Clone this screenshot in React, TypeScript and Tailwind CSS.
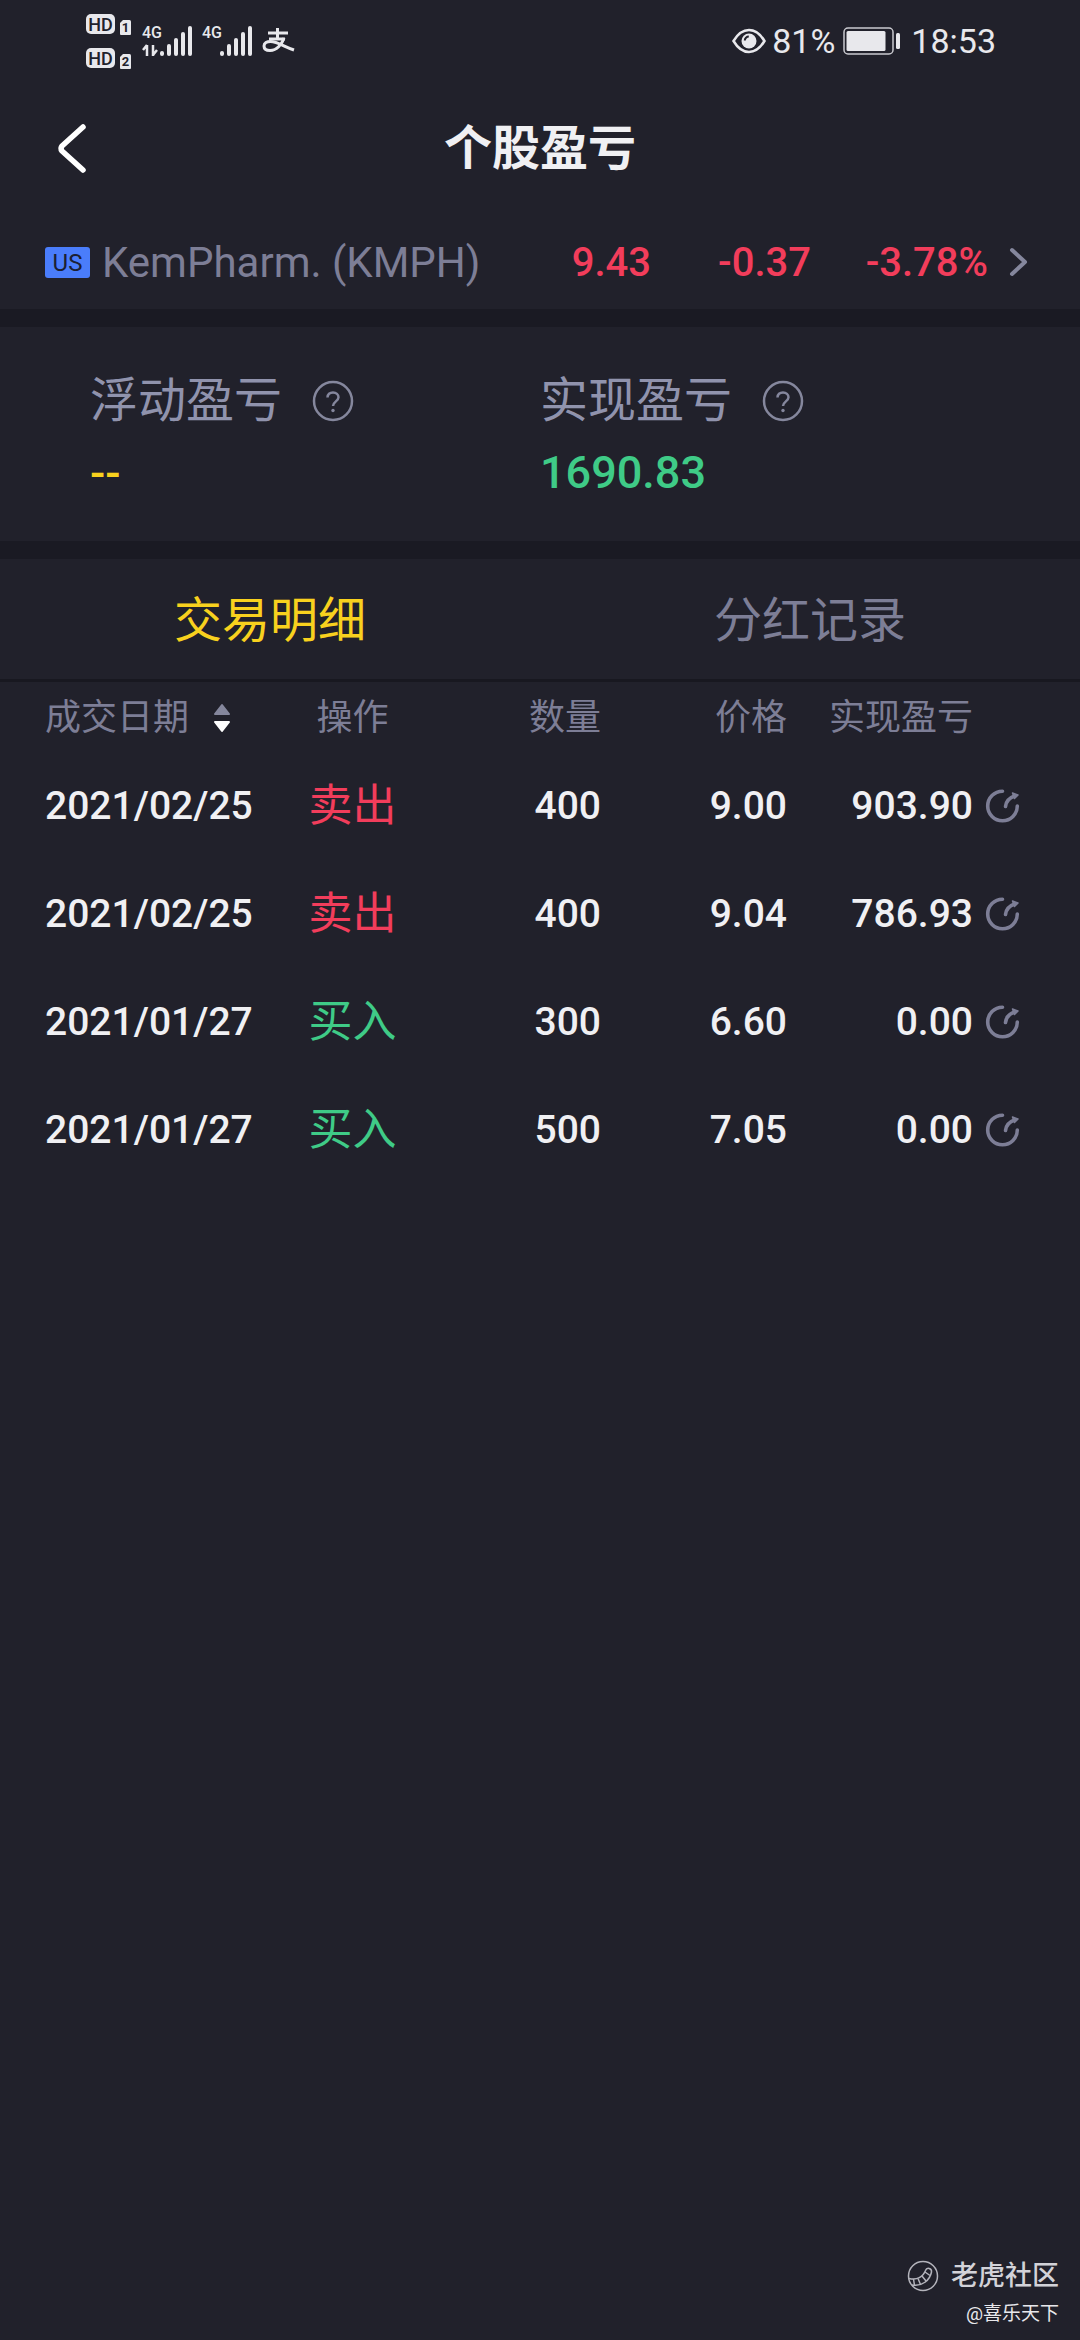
import { useState } from "react";

type Trade = {
  date: string;
  side: "buy" | "sell";
  quantity: string;
  price: string;
  profit: string;
};

const TRADES: Trade[] = [
  { date: "2021/02/25", side: "sell", quantity: "400", price: "9.00", profit: "903.90" },
  { date: "2021/02/25", side: "sell", quantity: "400", price: "9.04", profit: "786.93" },
  { date: "2021/01/27", side: "buy", quantity: "300", price: "6.60", profit: "0.00" },
  { date: "2021/01/27", side: "buy", quantity: "500", price: "7.05", profit: "0.00" },
];

const TABS = ["交易明细", "分红记录"];

function HdBadge({ sim }: { sim: string }) {
  return (
    <svg width="47" height="22" viewBox="0 0 47 22" aria-hidden="true">
      <rect x="1" y="1" width="29" height="20" rx="5" fill="#e8e8ec" />
      <text x="15.5" y="17.5" textAnchor="middle" fontSize="18" fontWeight="500" fill="#21212b">HD</text>
      <path d="M38 7h6.500a1.500 1.500 0 0 1 1.500 1.500V21a1 1 0 0 1-1 1H36a1 1 0 0 1-1-1V10z" fill="#e8e8ec" />
      <text x="40.500" y="19" textAnchor="middle" fontSize="13" fontWeight="700" fill="#21212b">{sim}</text>
    </svg>
  );
}

function Signal({ data }: { data?: boolean }) {
  return (
    <svg width="52" height="34" viewBox="0 0 52 34" fill="#e8e8ec" aria-hidden="true">
      <text x="0" y="14" fontSize="16" fontWeight="500">4G</text>
      {data && (
        <path d="M5 21v11M5 21l-4 5M11 21v11M11 31l4-5" fill="none" stroke="#e8e8ec" strokeWidth="2.500" />
      )}
      <rect x="18" y="27" width="4" height="5" rx="2" />
      <rect x="25" y="20" width="4" height="12" rx="2" />
      <rect x="32" y="14" width="4" height="18" rx="2" />
      <rect x="39" y="8" width="4" height="24" rx="2" />
      <rect x="46" y="2" width="4" height="30" rx="2" />
    </svg>
  );
}

function PayIcon() {
  return (
    <svg width="34" height="28" viewBox="0 0 34 28" fill="none" stroke="#e8e8ec" aria-hidden="true">
      <path d="M6 6h20M15.500 1v11M7 12h16" strokeWidth="3" />
      <path
        d="M22 11c-2 6-7 12.500-14 12.500C4 23.500 2 21.500 2 19c0-3 3-4.500 6.500-4.500C15 14.500 22 19.500 32 23"
        strokeWidth="3"
      />
    </svg>
  );
}

function EyeIcon() {
  return (
    <svg width="34" height="26" viewBox="0 0 34 26" fill="none" aria-hidden="true">
      <path d="M1.500 13C6 5.500 11 2 17 2s11 3.500 15.500 11C28 20.500 23 24 17 24S6 20.500 1.500 13z" stroke="#e8e8ec" strokeWidth="2.500" />
      <circle cx="17" cy="13" r="7.500" fill="#e8e8ec" />
      <path d="M12.800 12.500a4 4 0 0 1 4-4" stroke="#21212b" strokeWidth="2" />
    </svg>
  );
}

function BatteryIcon() {
  return (
    <svg width="58" height="28" viewBox="0 0 58 28" aria-hidden="true">
      <rect x="1" y="1" width="49" height="26" rx="4" fill="none" stroke="#c9c9cf" strokeWidth="1.500" />
      <rect x="3.500" y="4" width="39" height="20" rx="1.500" fill="#e8e8ec" />
      <rect x="53" y="6" width="4" height="16" rx="1.500" fill="#e8e8ec" />
    </svg>
  );
}

function HelpIcon() {
  return (
    <svg width="42" height="42" viewBox="0 0 42 42" fill="none" stroke="#85879d" aria-hidden="true">
      <circle cx="21" cy="21" r="19" strokeWidth="2.500" />
      <path d="M15.500 17.500c0-3.200 2.300-5 5.500-5s5.500 2 5.500 4.800c0 4-5.500 4.200-5.500 8.700" strokeWidth="2.500" />
      <circle cx="21" cy="30.500" r="1.700" fill="#85879d" stroke="none" />
    </svg>
  );
}

function ShareIcon() {
  return (
    <svg width="36" height="36" viewBox="0 0 36 36" fill="none" stroke="#7d7e96" strokeLinecap="round" strokeLinejoin="round" aria-hidden="true">
      <path d="M17.500 3.200A14.800 14.800 0 1 0 32.300 18" strokeWidth="3.600" />
      <path d="M20.500 18.500c.500-5 3.500-8.500 9-10.500" strokeWidth="3.600" />
      <path d="M27.500 5l5.500 2-3.500 3.500z" fill="#7d7e96" strokeWidth="1.500" />
    </svg>
  );
}

function StatusBar() {
  return (
    <div className="flex h-[82px] items-center justify-between pl-[85px] pr-[84px] text-[#e8e8ec]">
      <div className="flex items-center">
        <div className="mr-2.5 flex flex-col gap-3">
          <HdBadge sim="1" />
          <HdBadge sim="2" />
        </div>
        <Signal data />
        <span className="mx-2">
          <Signal />
        </span>
        <PayIcon />
      </div>
      <div className="flex items-center text-[34px]">
        <EyeIcon />
        <span className="ml-1.5 mr-2">81%</span>
        <BatteryIcon />
        <span className="ml-2.5">18:53</span>
      </div>
    </div>
  );
}

function Summary({ label, value, color }: { label: string; value: string; color: string }) {
  return (
    <div>
      <div className="flex items-center gap-[30px]">
        <span className="text-[48px] leading-[72px] text-[#9093ad]">{label}</span>
        <button type="button" aria-label={label}>
          <HelpIcon />
        </button>
      </div>
      <div className={`text-[45px] font-medium leading-[72px] ${color}`}>{value}</div>
    </div>
  );
}

export default function App() {
  const [tab, setTab] = useState(TABS[0]);

  return (
    <div className="flex min-h-screen flex-col bg-[#21212b] font-[Roboto,'Noto_Sans_CJK_SC',sans-serif]">
      <StatusBar />

      {/* Title */}
      <header className="grid h-[134px] grid-cols-[1fr_auto_1fr] items-center px-[51px]">
        <button type="button" aria-label="返回" className="justify-self-start">
          <svg width="40" height="54" viewBox="0 0 40 54" fill="none" stroke="#fff" strokeWidth="5.500" strokeLinecap="round" strokeLinejoin="round">
            <path d="M32 5L11 24q-2 2.500 0 5L32 48" />
          </svg>
        </button>
        <h1 className="text-[48px] font-bold text-[#f0f0f3]">个股盈亏</h1>
      </header>

      {/* Stock quote */}
      <a href="#quote" className="flex h-[93px] items-center pl-[45px] pr-[50px] text-[40px] font-medium text-[#f23d5b]">
        <span className="flex h-[31px] w-[45px] items-center justify-center rounded-[3px] bg-[#4a7dfb] text-[24px] font-normal text-[#1b2033]">
          US
        </span>
        <span className="ml-3 flex-1 text-[42px] font-normal text-[#7d7e96]">KemPharm. (KMPH)</span>
        <span>9.43</span>
        <span className="w-[160px] text-right">-0.37</span>
        <span className="w-[177px] text-right">-3.78%</span>
        <svg className="ml-5" width="22" height="34" viewBox="0 0 22 34" fill="none" stroke="#85879d" strokeWidth="4" strokeLinecap="round" strokeLinejoin="round">
          <path d="M4 4l13 12L4 28" />
        </svg>
      </a>

      {/* Profit summary */}
      <section className="grid grid-cols-[5fr_6fr] border-y-[18px] border-[#1a1a23] pb-8 pl-[90px] pt-[38px]">
        <Summary label="浮动盈亏" value="--" color="text-[#f8d11e]" />
        <Summary label="实现盈亏" value="1690.83" color="text-[#3fcb87]" />
      </section>

      <div role="tablist" className="flex border-b-[3px] border-[#181820]">
        {TABS.map((name) => (
          <button
            key={name}
            type="button"
            role="tab"
            aria-selected={tab === name}
            onClick={() => setTab(name)}
            className={`h-[120px] flex-1 pt-1 text-[48px] ${tab === name ? "text-[#f8d11e]" : "text-[#7d7e96]"}`}
          >
            {name}
          </button>
        ))}
      </div>

      {/* Trades */}
      <table className="w-full table-fixed">
        <thead>
          <tr className="h-[70px] text-right text-[36px] text-[#7d7e96]">
            <th className="w-[300px] pl-[45px] pt-0.5 text-left font-normal">
              <button type="button" className="flex items-center gap-6">
                成交日期
                <svg width="18" height="30" viewBox="0 0 18 30" strokeLinejoin="round" strokeWidth="2">
                  <path d="M9 2l7 9H2z" fill="#85879d" stroke="#85879d" />
                  <path d="M9 28l7-9H2z" fill="#fff" stroke="#fff" />
                </svg>
              </button>
            </th>
            <th className="w-[105px] pt-0.5 text-center font-normal">操作</th>
            <th className="w-[196px] pt-0.5 font-normal">数量</th>
            <th className="w-[186px] pt-0.5 font-normal">价格</th>
            <th className="w-[186px] pt-0.5 font-normal">实现盈亏</th>
            <th className="w-[107px]" aria-label="分享" />
          </tr>
        </thead>
        <tbody>
          {TRADES.map((trade, i) => (
            <tr key={i} className="h-[108px] text-right text-[39px] font-medium text-[#f0f0f3]">
              <td className="pl-[45px] text-left">{trade.date}</td>
              <td className={`text-center text-[44px] font-normal ${trade.side === "sell" ? "text-[#f23d5b]" : "text-[#3fcb87]"}`}>
                {trade.side === "sell" ? "卖出" : "买入"}
              </td>
              <td>{trade.quantity}</td>
              <td>{trade.price}</td>
              <td>{trade.profit}</td>
              <td className="pl-3 text-left">
                <button type="button" aria-label="分享" className="block">
                  <ShareIcon />
                </button>
              </td>
            </tr>
          ))}
        </tbody>
      </table>

      {/* Community mark */}
      <footer className="mt-auto flex flex-col items-end pb-2 pr-[21px]">
        <div className="flex items-center gap-3 text-[27px] font-medium leading-10 text-[#d2d2d8]">
          <svg width="32" height="32" viewBox="0 0 32 32" fill="none" stroke="#b4b4bc" strokeWidth="1.500">
            <circle cx="16" cy="16" r="14.500" />
            <path d="M2 18.500c8 2 14-1.500 16.500-8 1.200-3.500 6.500-2.500 6 1.500C23 20 15 27 5 25" />
            <path d="M6.500 19l1 6.500M11 18.500l2.500 6M15 16l4 5M18 12l5 3.500" />
          </svg>
          老虎社区
        </div>
        <div className="text-[19px] leading-9 text-[#e8e8ec]">@喜乐天下</div>
      </footer>
    </div>
  );
}
